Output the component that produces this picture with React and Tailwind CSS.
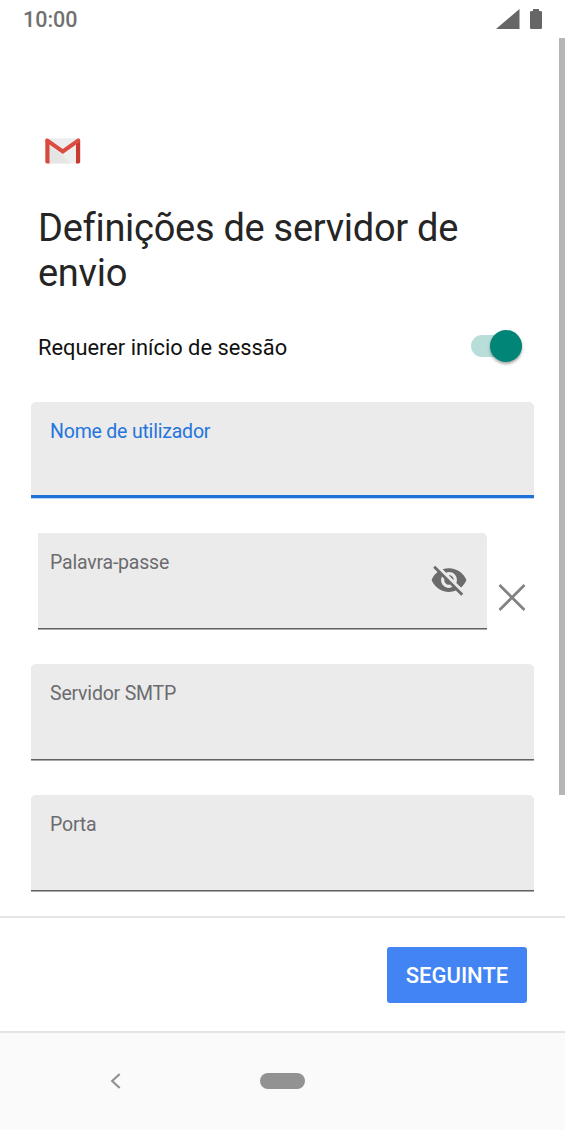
import { useState } from 'react';
import clsx from 'clsx';

const StatusBar = () => (
  <header className="flex h-[38px] shrink-0 items-center justify-between pl-[23px] pr-[23px]">
    <span className="pt-[2px] text-[21.5px] leading-[38px] font-medium text-[#707070]">10:00</span>
    <div className="flex items-center gap-[10px]">
      <svg width="24" height="20" viewBox="0 0 24 20" fill="#666666">
        <path d="M23.500 0V20H0Z" />
      </svg>
      <svg width="12" height="20" viewBox="0 0 12 20" fill="#666666">
        <path d="M3 0h6v2h1.800q1.200 0 1.200 1.200v15.600q0 1.200-1.200 1.200H1.200Q0 20 0 18.800V3.200Q0 2 1.200 2H3Z" />
      </svg>
    </div>
  </header>
);

const GmailLogo = () => (
  <svg className="ml-[7px]" width="36" height="26" viewBox="0 0 36 26">
    <path d="M2 0.500H34V25.500H2Z" fill="#eeeeee" />
    <path d="M4 25.500L15.500 16L18 17.500L25 25.500Z" fill="#e6e6e6" />
    <path d="M4 8L18 18L4 25.500Z" fill="#e4e4e4" />
    <path d="M2.500 0.500H33.500L18 11.500Z" fill="#ededed" />
    <path d="M0.300 2.500Q0.300 0.500 2 0.500L4.500 5.500V25.500H2Q0.300 25.500 0.300 23.800Z" fill="#d54b3d" />
    <path d="M35.200 2.500Q35.200 0.500 33.500 0.500L31 5.500V25.500H33.500Q35.200 25.500 35.200 23.800Z" fill="#c73a2f" />
    <path d="M0.300 2.500Q0.300 0.500 2.300 0.500Q3 0.500 3.600 1L17.750 11L31.900 1Q32.500 0.500 33.200 0.500Q35.200 0.500 35.200 2.500Q35.200 3.800 34 4.600L17.750 16L1.500 4.600Q0.300 3.800 0.300 2.500Z" fill="#dc4c40" />
  </svg>
);

const EyeOff = () => (
  <svg width="38" height="38" viewBox="0 0 24 24" fill="#6b6b6b">
    <path d="M12 7c2.760 0 5 2.240 5 5 0 .65-.13 1.260-.36 1.830l2.920 2.920c1.510-1.260 2.700-2.890 3.430-4.750-1.730-4.390-6-7.500-11-7.500-1.400 0-2.740.25-3.980.7l2.160 2.160C10.740 7.130 11.350 7 12 7zM2 4.270l2.280 2.280.46.460C3.080 8.300 1.780 10.020 1 12c1.730 4.390 6 7.500 11 7.500 1.550 0 3.030-.3 4.380-.84l.42.42L19.730 22 21 20.730 3.270 3 2 4.270zM7.530 9.800l1.550 1.550c-.05.21-.08.43-.08.65 0 1.660 1.340 3 3 3 .22 0 .44-.03.65-.08l1.550 1.550c-.67.33-1.410.53-2.200.53-2.760 0-5-2.240-5-5 0-.79.2-1.530.53-2.200zm4.310-.78l3.150 3.150.02-.16c0-1.660-1.340-3-3-3l-.17.010z" />
  </svg>
);

const Field = ({ label, name, type = 'text', active, className, labelClass, children, onFocus }) => (
  <div
    className={clsx(
      'flex h-[96px] bg-[#ebebeb]',
      active
        ? 'border-b-[3px] border-[#1f70d8] shadow-[0_1px_0_#b5d6f7]'
        : 'border-b border-[#606165] shadow-[0_1px_0_#a9a9ac]',
      className
    )}
  >
    <label
      className={clsx(
        'flex-1 pt-[17px] text-[19.5px] leading-[26px] tracking-[-0.2px]',
        active ? 'text-[#2475dc]' : 'text-[#6b6c6f]',
        labelClass
      )}
    >
      {label}
      <input name={name} type={type} onFocus={onFocus} className="block h-8 w-full bg-transparent outline-none" />
    </label>
    {children}
  </div>
);

const App = () => {
  const [requireLogin, setRequireLogin] = useState(true);
  const [activeField, setActiveField] = useState('username');
  const [showPassword, setShowPassword] = useState(false);

  return (
    <div className="relative flex h-[1130px] w-[565px] flex-col overflow-hidden bg-white font-[Roboto,sans-serif]">
      <StatusBar />

      <main className="h-[878px] shrink-0 px-[31px] pt-[100px]">
        <div className="h-[68px] px-[7px]">
          <GmailLogo />
        </div>
        <h1 className="h-[90px] px-[7px] text-[38px] leading-[45px] font-normal tracking-[-0.28px] text-[#252525]">
          Definições de servidor de
          <br />
          envio
        </h1>

        <div className="mt-[31px] flex h-[38px] items-center justify-between pr-[12px] pl-[7px]">
          <span className="pt-[3px] text-[21.85px] leading-[38px] text-[#111111]">Requerer início de sessão</span>
          <button
            onClick={() => setRequireLogin((prev) => !prev)}
            aria-pressed={requireLogin}
            className={clsx(
              'flex h-[22px] w-[51px] items-center rounded-full',
              requireLogin ? 'justify-end bg-[#b9ded9]' : 'justify-start bg-gray-300'
            )}
          >
            <span
              className={clsx(
                'h-8 w-8 shrink-0 rounded-full shadow-[0_2px_3px_rgba(0,0,0,0.35)]',
                requireLogin ? 'bg-[#018577]' : 'bg-gray-100'
              )}
            />
          </button>
        </div>

        <div className="mt-[37px] flex w-[502.5px] flex-col gap-[35px]">
          <Field
            label="Nome de utilizador"
            name="username"
            active={activeField === 'username'}
            onFocus={() => setActiveField('username')}
            className="rounded-t-[5px]"
            labelClass="pl-[19px]"
          />
          <div className="flex pl-[7px]">
            <Field
              label="Palavra-passe"
              name="password"
              type={showPassword ? 'text' : 'password'}
              active={activeField === 'password'}
              onFocus={() => setActiveField('password')}
              className="w-[448.5px] rounded-tr-[5px]"
              labelClass="pl-[12px]"
            >
              <button onClick={() => setShowPassword((prev) => !prev)} className="mt-[28px] mr-[19px] h-[38px]">
                <EyeOff />
              </button>
            </Field>
            <button className="mt-[51px] ml-[11px] h-[27px]">
              <svg width="28" height="27" viewBox="0 0 28 27" fill="none" stroke="#828282" strokeWidth="2.7">
                <path d="M1.500 1L26.500 26M26.500 1L1.500 26" />
              </svg>
            </button>
          </div>
          <Field
            label="Servidor SMTP"
            name="smtp"
            active={activeField === 'smtp'}
            onFocus={() => setActiveField('smtp')}
            className="rounded-t-[5px]"
            labelClass="pl-[19px]"
          />
          <Field
            label="Porta"
            name="port"
            active={activeField === 'port'}
            onFocus={() => setActiveField('port')}
            className="rounded-t-[5px]"
            labelClass="pl-[19px]"
          />
        </div>
      </main>

      <footer className="flex h-[115px] shrink-0 justify-end border-t-2 border-[#e6e6e6] pt-[28.5px] pr-[38px]">
        <button className="h-[56.5px] w-[140px] rounded-[3px] bg-[#4284f3] pt-[2px] text-[22px] font-medium text-white">
          SEGUINTE
        </button>
      </footer>

      <nav className="flex h-[99px] shrink-0 items-center border-t-2 border-[#e4e4e4] bg-[#fafafa] pb-[2px] pl-[110px]">
        <svg width="11" height="16" viewBox="0 0 11 16" fill="none" stroke="#929292" strokeWidth="2.2">
          <path d="M9.700 1L2.200 8L9.700 15" />
        </svg>
        <div className="ml-[139px] h-4 w-[45px] rounded-full bg-[#929292]" />
      </nav>

      <div className="absolute top-[38px] right-0 h-[757px] w-[6.5px] bg-[#b6b6b6]" />
    </div>
  );
};

export default App;
